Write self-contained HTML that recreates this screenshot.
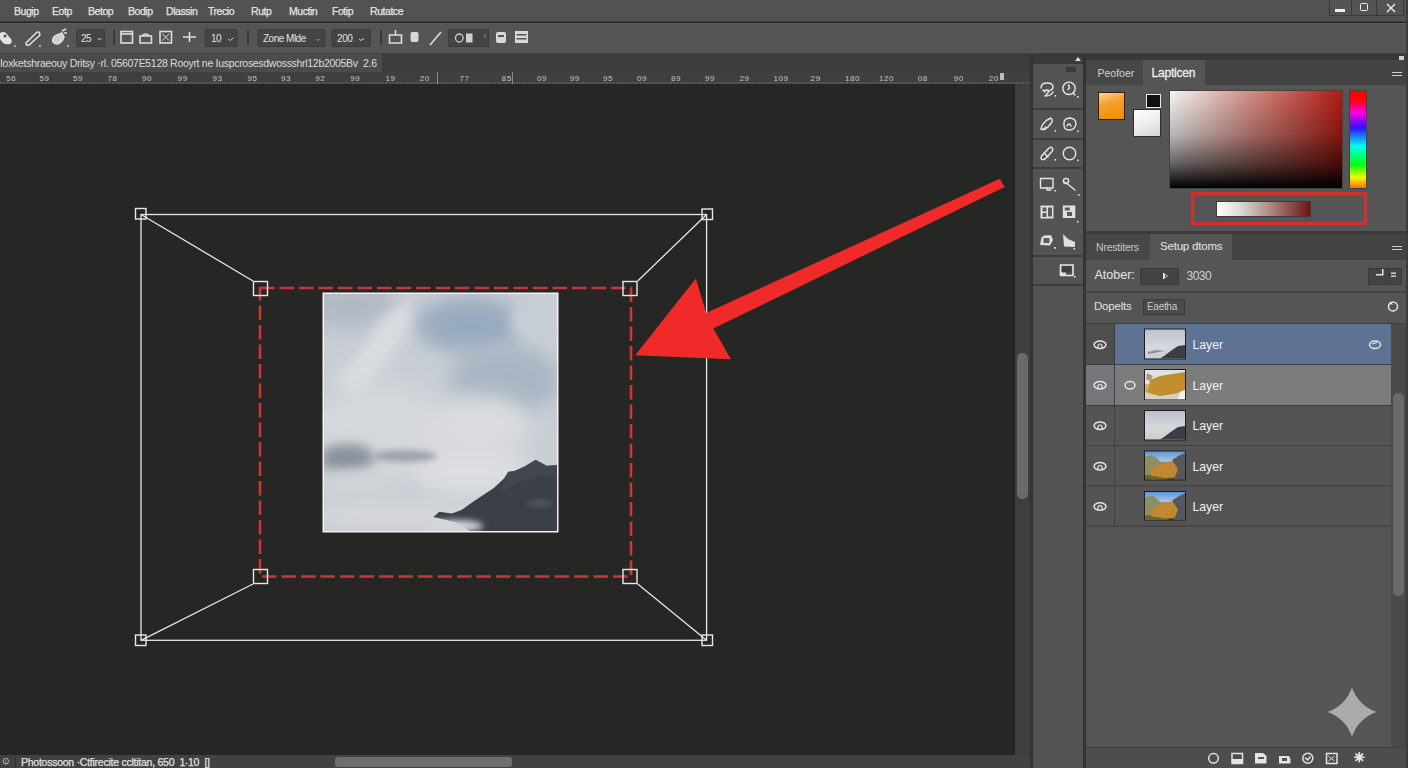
<!DOCTYPE html>
<html><head><meta charset="utf-8">
<style>
*{margin:0;padding:0;box-sizing:border-box}
html,body{width:1408px;height:768px;overflow:hidden;background:#252525;font-family:"Liberation Sans",sans-serif;color:#d8d8d8}
.a{position:absolute}
#menubar{left:0;top:0;width:1408px;height:22px;background:#525252;border-bottom:1px solid #3c3c3c}
#menubar span{position:absolute;top:5px;font-size:10.5px;color:#e4e4e4;letter-spacing:-0.45px;-webkit-text-stroke:0.25px #e4e4e4}
#toolbar{left:0;top:23px;width:1408px;height:31px;background:#555555;border-top:1px solid #5e5e5e;border-bottom:1px solid #404040}
#tabbar{left:0;top:54px;width:1032px;height:18px;background:#3c3c3c}
#tab1{left:0;top:54px;width:382px;height:18px;background:#4b4b4b}
#ruler{left:0;top:72px;width:1032px;height:12px;background:#3a3a3a;border-bottom:1px dotted #777}
#canvas{left:0;top:84px;width:1015px;height:671px;background:#262625}
#vtrack{left:1015px;top:84px;width:16px;height:671px;background:#3e3e3e}
#status{left:0;top:755px;width:1032px;height:13px;background:#424242}
#toolstrip{left:1031px;top:53px;width:55px;height:715px;background:#333}
#panel{left:1086px;top:53px;width:322px;height:715px;background:#383838}
</style></head><body>
<div id="menubar" class="a">
<span style="left:14px">Bugip</span>
<span style="left:52px">Eotp</span>
<span style="left:88px">Betop</span>
<span style="left:128px">Bodip</span>
<span style="left:166px">Dlassin</span>
<span style="left:208px">Trecio</span>
<span style="left:251px">Rutp</span>
<span style="left:289px">Muctin</span>
<span style="left:332px">Fotip</span>
<span style="left:370px">Rutatce</span>
</div>
<div id="toolbar" class="a"></div>
<div id="tabbar" class="a"></div>
<div id="tab1" class="a"></div>
<!-- ruler -->
<svg class="a" style="left:0;top:72px" width="1032" height="12">
<rect x="0" y="0" width="1032" height="12" fill="#3f3f3f"/>
<line x1="0" y1="11" x2="1030" y2="11" stroke="#8a8a8a" stroke-width="1" stroke-dasharray="1 1.2"/>
<rect x="437" y="0" width="1" height="12" fill="#888"/><rect x="512" y="0" width="1" height="12" fill="#888"/>
<g font-family="Liberation Sans" font-size="8" fill="#c4c4c4" letter-spacing="0.6">
<text x="6.3" y="9">56</text>
<text x="39.5" y="9">59</text>
<text x="73" y="9">59</text>
<text x="107.5" y="9">78</text>
<text x="142" y="9">90</text>
<text x="177.6" y="9">99</text>
<text x="212.4" y="9">93</text>
<text x="247.4" y="9">95</text>
<text x="281" y="9">93</text>
<text x="315.3" y="9">92</text>
<text x="350.3" y="9">99</text>
<text x="385.4" y="9">19</text>
<text x="419.8" y="9">20</text>
<text x="459.5" y="9">77</text>
<text x="501.6" y="9">85</text>
<text x="537" y="9">09</text>
<text x="569.8" y="9">99</text>
<text x="603" y="9">95</text>
<text x="637" y="9">09</text>
<text x="671" y="9">89</text>
<text x="705" y="9">99</text>
<text x="739.4" y="9">29</text>
<text x="773.5" y="9">109</text>
<text x="810.6" y="9">29</text>
<text x="845" y="9">180</text>
<text x="879" y="9">120</text>
<text x="917.7" y="9">08</text>
<text x="953.7" y="9">90</text>
<text x="988.7" y="9">20</text>
</g>
<rect x="1000" y="1" width="4" height="7" fill="#bbb"/>
</svg>
<div id="canvas" class="a"></div>
<svg class="a" style="left:0;top:0" width="1408" height="768" viewBox="0 0 1408 768">
<defs>
<linearGradient id="sky" x1="0" y1="0" x2="0.3" y2="1">
<stop offset="0" stop-color="#b4bdc7"/>
<stop offset="0.35" stop-color="#c3c9d0"/>
<stop offset="0.6" stop-color="#d3d5d8"/>
<stop offset="1" stop-color="#cfd1d4"/>
</linearGradient>
<filter id="blur6" x="-50%" y="-50%" width="200%" height="200%"><feGaussianBlur stdDeviation="6"/></filter>
<filter id="blur3" x="-50%" y="-50%" width="200%" height="200%"><feGaussianBlur stdDeviation="3"/></filter>
<filter id="blur10" x="-50%" y="-50%" width="200%" height="200%"><feGaussianBlur stdDeviation="10"/></filter>
<clipPath id="photoclip"><rect x="324" y="294" width="233" height="237"/></clipPath>
</defs>
<!-- photo -->
<rect x="322.5" y="292.5" width="236" height="240" fill="#f2f2f2"/>
<g clip-path="url(#photoclip)">
<rect x="324" y="294" width="233" height="237" fill="#c9ced4"/>
<ellipse cx="350" cy="305" rx="50" ry="25" fill="#b3bac4" filter="url(#blur10)"/>
<ellipse cx="470" cy="325" rx="55" ry="28" fill="#98aac0" filter="url(#blur10)"/>
<ellipse cx="505" cy="380" rx="55" ry="35" fill="#a9b5c3" filter="url(#blur10)"/>
<ellipse cx="535" cy="320" rx="25" ry="20" fill="#c7ced6" filter="url(#blur6)"/>
<path d="M405 300 Q420 320 395 350 Q375 380 355 400 L335 380 Q365 350 380 320 Z" fill="#d8dbdf" filter="url(#blur6)"/>
<ellipse cx="380" cy="430" rx="70" ry="45" fill="#d5d8db" filter="url(#blur10)"/>
<ellipse cx="480" cy="425" rx="50" ry="30" fill="#d9dbde" filter="url(#blur10)"/>
<ellipse cx="470" cy="470" rx="60" ry="25" fill="#dcdee0" filter="url(#blur10)"/>
<ellipse cx="347" cy="458" rx="28" ry="14" fill="#8a929c" filter="url(#blur6)"/>
<ellipse cx="405" cy="456" rx="32" ry="6" fill="#9ca2aa" filter="url(#blur3)"/>
<ellipse cx="360" cy="485" rx="40" ry="15" fill="#cfd2d6" filter="url(#blur6)"/>
<ellipse cx="400" cy="515" rx="90" ry="14" fill="#d3d5d8" filter="url(#blur6)"/>
<path d="M433.3 516.9 L439.3 511.8 L446 512.7 L452 513.5 L461.5 510 L473.4 501.6 L483.6 494.8 L493.9 488 L504 478.6 L508.3 471.8 L514.3 470.9 L524.5 466.6 L535.6 459.8 L546.7 465.8 L557 465 L557 531 L470 531 L455 522 Z" fill="#3b4048"/>
<path d="M504 478.6 L508.3 471.8 L514.3 470.9 L524.5 466.6 L535.6 459.8 L546.7 465.8 L557 465 L557 478 L540 476 L520 482 L500 492 Z" fill="#4b5058" opacity="0.45"/>
<ellipse cx="455" cy="526" rx="28" ry="6" fill="#d4d6d9" filter="url(#blur3)"/>
<ellipse cx="540" cy="503" rx="14" ry="2.5" fill="#5a5e64" filter="url(#blur3)"/>
</g>
<!-- outer transform rect -->
<g stroke="#e6e6e6" stroke-width="1.3" fill="none">
<rect x="141" y="214.5" width="565.6" height="425.8"/>
<line x1="141" y1="214.5" x2="253" y2="281"/>
<line x1="706.6" y1="214.5" x2="637.7" y2="281"/>
<line x1="141" y1="640.3" x2="253" y2="584"/>
<line x1="706.6" y1="640.3" x2="637.7" y2="584"/>
</g>
<!-- red dashed rect -->
<rect x="260" y="288" width="371" height="288.5" fill="none" stroke="#c9373a" stroke-width="2.6" stroke-dasharray="14.5 5"/>
<!-- handles -->
<g stroke="#e8e8e8" stroke-width="1.4" fill="none">
<rect x="135.5" y="208.5" width="10.5" height="10.5"/>
<rect x="702" y="209" width="10.5" height="10.5"/>
<rect x="135.5" y="635" width="10.5" height="10.5"/>
<rect x="702" y="635" width="10.5" height="10.5"/>
<rect x="253.5" y="281.5" width="14" height="14"/>
<rect x="623" y="281.5" width="14" height="14"/>
<rect x="253.5" y="569.5" width="14" height="14"/>
<rect x="623" y="569.5" width="14" height="14"/>
</g>
<!-- arrow -->
<path d="M999.7 178.7 L1004.7 186.9 L713.3 328.6 L730.9 359.2 L635.2 355.3 L695.8 278.5 L706.2 313 Z" fill="#ef2a28"/>
</svg>

<div id="vtrack" class="a"></div>
<div id="status" class="a"></div>
<!-- ===== tool strip ===== -->
<div class="a" style="left:1030px;top:54px;width:56px;height:714px;background:#343434"></div>
<div class="a" style="left:1033px;top:54px;width:50px;height:10.5px;background:#3a3a3a"></div>
<div class="a" style="left:1033px;top:64px;width:50px;height:704px;background:#535353"></div>
<div class="a" style="left:1066px;top:67px;width:10px;height:5px;background:#3a3a3a"></div>
<div class="a" style="left:1033px;top:108px;width:50px;height:1.5px;background:#3c3c3c"></div>
<div class="a" style="left:1033px;top:138px;width:50px;height:1.5px;background:#3c3c3c"></div>
<div class="a" style="left:1033px;top:167px;width:50px;height:1.5px;background:#3c3c3c"></div>
<div class="a" style="left:1033px;top:255px;width:50px;height:1.5px;background:#3c3c3c"></div>
<div class="a" style="left:1033px;top:284px;width:50px;height:1.5px;background:#3c3c3c"></div>
<!-- toolstrip icons -->
<svg class="a" style="left:1030px;top:50px" width="60" height="240" viewBox="1030 50 60 240">
<g fill="none" stroke="#e6e6e6" stroke-width="1.4" stroke-linecap="round" stroke-linejoin="round">
<!-- row1 lasso -->
<path d="M1041 88 Q1041 83 1047 83 Q1053 83 1053 87 Q1053 90 1048 91 M1044 91 Q1047 89 1049 91 Q1047 95 1045 96 Q1051 96 1053 92"/>
<path d="M1043 90 l2 2"/>
<!-- row1 magnifier -->
<circle cx="1069" cy="88.3" r="6.2"/>
<path d="M1068.5 85 l1 3 l-1.5 1.5 M1073 93 l2 2"/>
<!-- row2 pen -->
<path d="M1041 129 Q1042 124 1047 120 L1051 118 Q1053 120 1052 122 L1048 127 Q1044 131 1041 129 Z"/>
<path d="M1041 129 Q1044 130 1046 127" />
<!-- row2 circle -->
<path d="M1064 125 Q1063 119 1069 118 Q1076 118 1076 124 Q1075 130 1069 130 Q1064 130 1064 125 Z"/>
<path d="M1067 126 q2 -4 4 0"/>
<!-- row3 eraser -->
<path d="M1041.5 156 L1049 148 Q1051 146.5 1052.5 148.5 Q1053.5 150 1052 151.5 L1045 159 Q1042 160.5 1041 158.5 Z"/>
<path d="M1044 153 l4 4"/>
<!-- row3 circle -->
<circle cx="1069.5" cy="153.5" r="6.2"/>
<!-- row4 rect -->
<rect x="1040.5" y="178.5" width="12.5" height="9.5"/>
<path d="M1047 188 v2 h4"/>
<!-- row4 wand -->
<path d="M1065 182 l10 8"/>
<circle cx="1066" cy="181" r="2.6"/>
<!-- row7 monitor -->
<rect x="1060.5" y="265" width="12.5" height="10.5" stroke-width="1.6"/>
</g>
<g fill="#e0e0e0">
<!-- row5 icons -->
<rect x="1040.5" y="205.5" width="13" height="13" />
<rect x="1062.8" y="205.5" width="12.5" height="12.5"/>
<!-- row6 -->
<path d="M1040 245 L1041.5 237.5 L1044 235.5 L1051 235.2 L1053 240 L1050 245.5 Z"/>
<path d="M1063 234 L1068 239 L1075 242 L1075 247 L1064 246.5 L1063.5 240 Z"/>
<rect x="1060" y="272" width="6" height="4"/>
<!-- corner markers -->
<rect x="1054.5" y="95" width="1.6" height="1.6"/><rect x="1077" y="96" width="1.6" height="1.6"/>
<rect x="1054.5" y="130" width="1.6" height="1.6"/><rect x="1077" y="130.5" width="1.6" height="1.6"/>
<rect x="1054.5" y="159" width="1.6" height="1.6"/><rect x="1077" y="159.5" width="1.6" height="1.6"/>
<rect x="1054.5" y="190" width="1.6" height="1.6"/><rect x="1078" y="194" width="1.6" height="1.6"/>
<rect x="1077" y="221" width="1.6" height="1.6"/>
<rect x="1054" y="247" width="1.8" height="1.8"/><rect x="1073.5" y="248" width="1.6" height="1.6"/>
<rect x="1074" y="276" width="1.6" height="1.6"/>
<path d="M1075 61 l3 -4 l3 4 z"/>
</g>
<g fill="#5a5a5a">
<rect x="1042.5" y="207.5" width="4" height="4"/><rect x="1048" y="207.5" width="4" height="9"/><rect x="1042.5" y="213" width="4" height="4"/>
<rect x="1064.8" y="207.5" width="5" height="3"/><rect x="1067" y="212" width="5" height="4"/>
<rect x="1043.5" y="238" width="6" height="5"/>
<rect x="1062" y="266.5" width="9.5" height="6" fill="#3c3c3c"/>
</g>
</svg>

<!-- ===== panel ===== -->
<div class="a" style="left:1086px;top:54px;width:322px;height:6px;background:#393939"></div>
<div class="a" style="left:1086px;top:60px;width:320px;height:25px;background:#434343"></div>
<div class="a" style="left:1086px;top:60px;width:57px;height:25px;background:#474747"></div>
<div class="a" style="left:1143px;top:60px;width:62px;height:25px;background:#555555"></div>
<div class="a" style="left:1097.5px;top:66.5px;font-size:10.5px;color:#d2d2d2">Peofoer</div>
<div class="a" style="left:1151.5px;top:66px;font-size:12px;color:#ededed;letter-spacing:-0.2px;-webkit-text-stroke:0.3px #ededed">Lapticen</div>
<div class="a" style="left:1392px;top:71.5px;width:9.5px;height:1.3px;background:#cfcfcf"></div>
<div class="a" style="left:1392px;top:74.5px;width:9.5px;height:1.3px;background:#cfcfcf"></div>
<div class="a" style="left:1399px;top:56px;width:5px;height:4px;background:#cfcfcf"></div>
<div class="a" style="left:1086px;top:85px;width:320px;height:146px;background:#555555"></div>
<div class="a" style="left:1406px;top:0px;width:2px;height:768px;background:#3c3c3c"></div>
<!-- swatches -->
<div class="a" style="left:1097.5px;top:92px;width:27.5px;height:27.5px;background:linear-gradient(160deg,#fbd79a 0%,#f5a030 40%,#f08a00 100%);border:1px solid #2e2416"></div>
<div class="a" style="left:1145.5px;top:93.5px;width:15px;height:14.5px;background:#111;border:1.6px solid #e8e8e8"></div>
<div class="a" style="left:1132.5px;top:108.5px;width:28px;height:28px;background:linear-gradient(160deg,#ffffff 0%,#ececec 55%,#d2d2d2 100%);border:1px solid #2e2e2e"></div>
<!-- gradient square -->
<div class="a" style="left:1169.5px;top:90.5px;width:172.5px;height:97px;background:linear-gradient(to bottom,rgba(0,0,0,0) 0%,rgba(0,0,0,0.25) 45%,rgba(0,0,0,0.6) 75%,#000 100%),linear-gradient(to right,#f6f6f6 0%,#d49088 45%,#b01c14 100%);box-shadow:0 0 0 0.5px #333"></div>
<div class="a" style="left:1350px;top:90.5px;width:16px;height:97px;background:linear-gradient(to bottom,#ff0000 0%,#ff0010 10%,#ff00e0 22%,#3010ff 38%,#00ffee 57%,#00ff10 76%,#f0ff00 89%,#ff6a00 100%);box-shadow:0 0 0 0.5px #3a2a2a"></div>
<div class="a" style="left:1190.5px;top:192px;width:176px;height:33px;border:3px solid #d3302d"></div>
<div class="a" style="left:1216.5px;top:201.5px;width:93px;height:14.5px;background:linear-gradient(to right,#ffffff 0%,#d9d9d6 25%,#b08e88 55%,#701414 100%);box-shadow:0 0 0 0.6px #3a2020"></div>
<!-- panel 2 -->
<div class="a" style="left:1086px;top:231px;width:320px;height:3px;background:#3a3a3a"></div>
<div class="a" style="left:1086px;top:234px;width:320px;height:26px;background:#434343"></div>
<div class="a" style="left:1086px;top:234px;width:64px;height:26px;background:#474747"></div>
<div class="a" style="left:1150px;top:234px;width:82px;height:26px;background:#555555"></div>
<div class="a" style="left:1096px;top:241px;font-size:10.5px;color:#c8c8c8;letter-spacing:-0.2px">Nrestiters</div>
<div class="a" style="left:1160px;top:240px;font-size:11.5px;color:#e6e6e6;letter-spacing:-0.2px">Setup dtoms</div>
<div class="a" style="left:1392px;top:245.5px;width:9.5px;height:1.3px;background:#cfcfcf"></div>
<div class="a" style="left:1392px;top:248.5px;width:9.5px;height:1.3px;background:#cfcfcf"></div>
<div class="a" style="left:1086px;top:260px;width:320px;height:487px;background:#555555"></div>
<div class="a" style="left:1094.5px;top:268px;font-size:12.5px;color:#e6e6e6">Atober:</div>
<div class="a" style="left:1139.5px;top:267.5px;width:39px;height:17px;background:#434343;border:1px solid #3a3a3a"></div>
<div class="a" style="left:1186.5px;top:269px;font-size:12px;color:#d0d0d0;letter-spacing:-0.5px">3030</div>
<div class="a" style="left:1368px;top:267.5px;width:33.5px;height:17px;background:#444;border:1px solid #393939"></div>
<div class="a" style="left:1086px;top:291px;width:320px;height:1.5px;background:#434343"></div>
<div class="a" style="left:1094px;top:300px;font-size:11.5px;color:#e0e0e0;letter-spacing:-0.2px">Dopelts</div>
<div class="a" style="left:1142.5px;top:298.5px;width:42px;height:16.5px;background:#4a4a4a;border:1px solid #3c3c3c"></div>
<div class="a" style="left:1147px;top:301px;font-size:10px;color:#c8c8c8;letter-spacing:-0.3px">Eaetha</div>
<div class="a" style="left:1086px;top:323px;width:320px;height:1.5px;background:#3f3f3f"></div>

<!-- layers -->
<svg class="a" style="left:0;top:0" width="1408" height="768">
<defs>
<linearGradient id="tsky" x1="0" y1="0" x2="0" y2="1"><stop offset="0" stop-color="#b9c2cc"/><stop offset="0.6" stop-color="#d6d8dc"/><stop offset="1" stop-color="#c9ccd0"/></linearGradient>
<linearGradient id="tgold" x1="0" y1="0" x2="1" y2="1"><stop offset="0" stop-color="#e8e4da"/><stop offset="0.45" stop-color="#c99a3a"/><stop offset="0.7" stop-color="#b07a2a"/><stop offset="1" stop-color="#d8d2c4"/></linearGradient>
<linearGradient id="tblue" x1="0" y1="0" x2="0" y2="1"><stop offset="0" stop-color="#5b93d6"/><stop offset="0.35" stop-color="#a9c6e6"/><stop offset="0.4" stop-color="#8c8a5c"/><stop offset="0.75" stop-color="#b58a30"/><stop offset="1" stop-color="#3e4a30"/></linearGradient>
</defs>
<!-- row backgrounds -->
<rect x="1086" y="324" width="29" height="40" fill="#4e4e4e"/>
<rect x="1115" y="324" width="276" height="40" fill="#5e7293"/>
<rect x="1086" y="365" width="29" height="40" fill="#74767b"/>
<rect x="1115" y="365" width="276" height="40" fill="#7c7c7c"/>
<rect x="1086" y="405.5" width="305" height="120" fill="#545454"/>
<g fill="#3e3e3e">
<rect x="1086" y="364" width="305" height="1"/>
<rect x="1086" y="405" width="305" height="1"/>
<rect x="1086" y="445" width="305" height="1"/>
<rect x="1086" y="485.3" width="305" height="1"/>
<rect x="1086" y="525.5" width="305" height="1.2"/>
<rect x="1114" y="324" width="1" height="202"/>
</g>
<!-- thumbs -->
<g stroke="#1e1e1e" stroke-width="1">
<rect x="1144.5" y="329" width="41" height="30" fill="url(#tsky)"/>
<rect x="1144.5" y="369.5" width="41" height="30" fill="url(#tgold)"/>
<rect x="1144.5" y="410.5" width="41" height="29.5" fill="url(#tsky)"/>
<rect x="1144.5" y="451" width="41" height="29" fill="url(#tblue)"/>
<rect x="1144.5" y="491.5" width="41" height="28.5" fill="url(#tblue)"/>
</g>
<path d="M1164 356 L1172 350 L1178 346 L1185 345 L1185 358.5 L1160 358.5 Z" fill="#3a3f46"/>
<path d="M1164 437 L1172 431 L1178 427 L1185 426 L1185 439.5 L1160 439.5 Z" fill="#3a3f46"/>
<path d="M1148 352 L1156 350 L1165 351 L1148 354 Z" fill="#8a9098"/>
<path d="M1145 370 L1185 370 L1185 376 L1170 380 L1158 378 L1150 384 L1145 384 Z" fill="#dfe3e6"/>
<path d="M1150 380 L1160 376 L1172 374 L1185 372 L1185 390 L1170 394 L1155 395 L1148 392 Z" fill="#c38f2e"/>
<path d="M1145 392 L1160 396 L1185 392 L1185 399.5 L1145 399.5 Z" fill="#d6d0c2"/>
<path d="M1147 373 L1153 376 L1150 381 L1146 379 Z" fill="#a89a70"/>
<path d="M1180 392 L1185 390 L1185 399 L1178 399 Z" fill="#f2f2f0"/>
<path d="M1145 457 L1152 455 L1158 459 L1162 465 L1158 473 L1145 475 Z" fill="#8a8f6a"/>
<path d="M1150 469 L1162 463 L1172 461 L1178 467 L1176 477 L1152 479.5 Z" fill="#c08830"/>
<path d="M1172 460 L1180 455 L1185 453 L1185 479.5 L1174 479.5 L1178 469 Z" fill="#55575a"/>
<path d="M1145 475 L1160 477 L1170 479.5 L1145 479.5 Z" fill="#6a6530"/>
<path d="M1145 497.5 L1152 495.5 L1158 499.5 L1162 505.5 L1158 513.5 L1145 515.5 Z" fill="#8a8f6a"/>
<path d="M1150 509.5 L1162 503.5 L1172 501.5 L1178 507.5 L1176 517.5 L1152 520.0 Z" fill="#c08830"/>
<path d="M1172 500.5 L1180 495.5 L1185 493.5 L1185 520.0 L1174 520.0 L1178 509.5 Z" fill="#55575a"/>
<path d="M1145 515.5 L1160 517.5 L1170 520.0 L1145 520.0 Z" fill="#6a6530"/>

<!-- eyes -->
<g fill="none" stroke="#e4e4e4" stroke-width="1.5">
<ellipse cx="1100" cy="344.8" rx="6" ry="3.8"/>
<ellipse cx="1100" cy="385.3" rx="6" ry="3.8"/>
<ellipse cx="1100" cy="425.8" rx="6" ry="3.8"/>
<ellipse cx="1100" cy="466.3" rx="6" ry="3.8"/>
<ellipse cx="1100" cy="506.5" rx="6" ry="3.8"/>
<ellipse cx="1130" cy="385.3" rx="5" ry="3.8"/>
<ellipse cx="1375" cy="344.8" rx="5.5" ry="3.8"/>
</g>
<g fill="none" stroke="#e4e4e4" stroke-width="1.2">
<path d="M1098 348 v-2 a2 2 0 0 1 4 0 v2"/>
<path d="M1098 388.5 v-2 a2 2 0 0 1 4 0 v2"/>
<path d="M1098 429 v-2 a2 2 0 0 1 4 0 v2"/>
<path d="M1098 469.5 v-2 a2 2 0 0 1 4 0 v2"/>
<path d="M1098 509.7 v-2 a2 2 0 0 1 4 0 v2"/>
<path d="M1372 344 l5 -1.5"/>
</g>
</svg>
<div class="a" style="left:1192.5px;top:338px;font-size:12.2px;color:#f0f0f0">Layer</div>
<div class="a" style="left:1192.5px;top:378.5px;font-size:12.2px;color:#f0f0f0">Layer</div>
<div class="a" style="left:1192.5px;top:419px;font-size:12.2px;color:#f0f0f0">Layer</div>
<div class="a" style="left:1192.5px;top:459.5px;font-size:12.2px;color:#f0f0f0">Layer</div>
<div class="a" style="left:1192.5px;top:499.5px;font-size:12.2px;color:#f0f0f0">Layer</div>
<!-- scrollbar -->
<div class="a" style="left:1391px;top:324px;width:15px;height:423px;background:#4a4a4a"></div>
<div class="a" style="left:1392.5px;top:393px;width:11px;height:203px;background:#6a6a6a;border-radius:5px"></div>
<!-- footer -->
<div class="a" style="left:1086px;top:747px;width:320px;height:21px;background:#4d4d4d;border-top:1px solid #3e3e3e"></div>
<!-- footer icons & small panel icons -->
<svg class="a" style="left:1080px;top:255px" width="328" height="513" viewBox="1080 255 328 513">
<g fill="none" stroke="#e4e4e4" stroke-width="1.5">
<circle cx="1213.5" cy="758.3" r="4.8"/>
<rect x="1232" y="753.5" width="10.5" height="10"/>
<circle cx="1307.8" cy="758.3" r="5"/>
<rect x="1326.5" y="753.5" width="10.5" height="10"/>
<path d="M1305 757.5 l2.5 2.5 l3 -3.5"/>
<path d="M1328.5 756 l6 5 M1334.5 756 l-6 5" stroke-width="1"/>
<circle cx="1393" cy="306.4" r="4.5"/>
</g>
<g fill="#e4e4e4">
<rect x="1232" y="759" width="10.5" height="4.5"/>
<path d="M1255 753 h8 l3.5 3 v7.5 h-11.5 z"/>
<path d="M1279 756 h10 l1.5 3 v4.5 h-11.5 z"/>
<path d="M1358.5 752 h1.6 v3 l2.4 -2 1.1 1.1 -2 2.4 h3 v1.6 h-3 l2 2.4 -1.1 1.1 -2.4 -2 v3 h-1.6 v-3 l-2.4 2 -1.1 -1.1 2 -2.4 h-3 v-1.6 h3 l-2 -2.4 1.1 -1.1 2.4 2 z"/>
<path d="M1163 272.5 l5 3.5 l-5 3.5 z" />
<rect x="1376" y="274" width="7" height="1.5"/><rect x="1382" y="269" width="1.5" height="6.5"/>
<rect x="1391" y="272.5" width="5" height="1.3"/><rect x="1391" y="275.5" width="5" height="1.3"/>
</g>
<g fill="#535353">
<rect x="1258" y="757" width="6" height="2"/>
<rect x="1282" y="758" width="5" height="3"/>
<path d="M1165 274.5 l2 1.5 l-2 1.5 z"/>
<circle cx="1393" cy="306.4" r="1.5"/>
</g>
<path d="M1389 305 l1.5 -2 l2 1.5" stroke="#e4e4e4" stroke-width="1.2" fill="none"/>
<rect x="1388" y="267.5" width="0.8" height="17" fill="#3a3a3a"/>
</svg>

<!-- sparkle -->
<svg class="a" style="left:1326px;top:686px" width="52" height="52" viewBox="0 0 52 52"><path d="M26 1.5 Q32.5 19.5 50.5 26 Q32.5 32.5 26 50.5 Q19.5 32.5 1.5 26 Q19.5 19.5 26 1.5 Z" fill="#ababab"/></svg>

<!-- window controls -->
<div class="a" style="left:1328.5px;top:-1px;width:75px;height:17px;border:1px solid #3a3a3a;background:#535353"></div>
<div class="a" style="left:1350.5px;top:0;width:1px;height:16px;background:#3a3a3a"></div>
<div class="a" style="left:1375.5px;top:0;width:1px;height:16px;background:#3a3a3a"></div>
<div class="a" style="left:1335px;top:9px;width:10px;height:3px;background:#eee"></div>
<div class="a" style="left:1359.5px;top:2.5px;width:8.5px;height:8.5px;border:1.8px solid #eee;border-radius:1.5px"></div>
<svg class="a" style="left:1385px;top:2px" width="12" height="12"><path d="M2 2 L10 10 M10 2 L2 10" stroke="#eee" stroke-width="1.4"/></svg>
<!-- toolbar icons -->
<svg class="a" style="left:0;top:23px" width="540" height="30">
<g fill="#e2e2e2">
<path d="M0 10 Q3 8 6 10 L11 16 Q13 19 10 21 Q6 22 3 20 L0 16 Z"/>
</g>
<circle cx="5" cy="13" r="1.5" fill="#555"/>
<g fill="none" stroke="#dedede" stroke-width="1.6">
<path d="M26 20 L36 10 Q38 8 39.5 10 Q40.5 11.5 39 13 L29 22 Q26 23 26 20 Z"/>
<path d="M53 19 Q52 14 57 12 L62 10 L64 14 Q62 20 57 21 Q54 21 53 19 Z" fill="#cfcfcf"/>
<path d="M62 8 l4 -2 M64 10 l3 0"/>
<rect x="121" y="8.5" width="11.5" height="11.5"/>
<path d="M121 11 h11.5"/>
<path d="M140 20 v-7 h11.5 v7 z M142 13 q3.5 -4 7.5 0"/>
<rect x="160" y="8.5" width="11.5" height="11.5"/>
<path d="M162.5 11 l6.5 6.5 M169 11 l-6.5 6.5" stroke-width="1"/>
<path d="M183 14 h13 M189.5 9 v10" />
<path d="M389.5 12 h12 v8 h-12 z M395.5 12 v-5"/>
<path d="M430 22 L441 9"/>
</g>
<g fill="#d8d8d8"><rect x="410.5" y="9" width="8" height="10" rx="2"/><rect x="496" y="9" width="10" height="11" rx="2"/><rect x="515" y="8" width="13" height="12"/></g>
<g fill="#525252"><rect x="516.5" y="11" width="10" height="1.5"/><rect x="516.5" y="15" width="10" height="1.5"/><rect x="498" y="12" width="6" height="2"/></g>
<g fill="#d0d0d0"><circle cx="40" cy="23" r="0.9"/><circle cx="68" cy="23" r="0.9"/><circle cx="15" cy="23" r="0.9"/></g>
<!-- dropdown boxes -->
<g fill="#444444" stroke="#3c3c3c" stroke-width="1">
<rect x="76.5" y="6.5" width="28" height="17" rx="1"/>
<rect x="205" y="6.5" width="32" height="17" rx="1"/>
<rect x="258" y="6.5" width="67" height="17" rx="1"/>
<rect x="332" y="6.5" width="38.5" height="17" rx="1"/>
<rect x="448.5" y="6.5" width="40" height="17" rx="0.5"/>
</g>
<g fill="#3a3a3a"><rect x="113" y="7" width="2" height="15"/><rect x="247" y="7" width="2" height="15"/><rect x="380" y="7" width="2" height="15"/></g>
<g fill="none" stroke="#cfcfcf" stroke-width="1"><path d="M97.5 15 l2 2 l2 -2"/><path d="M228.5 16 l2 1.5 l3 -3"/><path d="M316 16 l2 1.5 l2 -1.5" stroke="#888"/><path d="M359 16 l2 1.5 l3 -2"/><ellipse cx="459.3" cy="15" rx="3.8" ry="4" stroke-width="1.3"/><rect x="466.5" y="11" width="5.5" height="8" fill="#cfcfcf"/><path d="M485 11 v4" stroke="#888"/></g>
</svg>
<div class="a" style="left:81px;top:33px;font-size:10px;color:#e2e2e2;letter-spacing:-0.5px">25</div>
<div class="a" style="left:211px;top:33px;font-size:10px;color:#e2e2e2;letter-spacing:-0.5px">10</div>
<div class="a" style="left:263px;top:33px;font-size:10px;color:#e2e2e2;letter-spacing:-0.5px">Zone Mlde</div>
<div class="a" style="left:337px;top:33px;font-size:10px;color:#e2e2e2;letter-spacing:-0.4px">200</div>
<!-- tab bar text -->
<div class="a" style="left:0;top:57px;font-size:10.5px;color:#dcdcdc;letter-spacing:-0.3px;white-space:nowrap">Ioxketshraeouy Dritsy ·rl. 05607E5128 Rooyrt ne Iuspcrosesdwossshrl12b2005Bv&nbsp;&nbsp;2.6</div>
<!-- status bar -->
<div class="a" style="left:15px;top:755px;width:1px;height:13px;background:#333"></div>
<div class="a" style="left:2px;top:756px;font-size:9px;color:#ddd">⊙</div>
<div class="a" style="left:21px;top:755px;font-size:10.5px;color:#e0e0e0;letter-spacing:-0.25px;white-space:nowrap;-webkit-text-stroke:0.25px #e0e0e0">Photossoon ·Ctfirecite ccltitan, 650&nbsp; 1‧10&nbsp; []</div>
<div class="a" style="left:335px;top:756.5px;width:177px;height:10.5px;background:#6e6e6e;border-radius:3px"></div>
<!-- canvas scrollbar thumb -->
<div class="a" style="left:1016.5px;top:352.5px;width:11.5px;height:146px;background:#6a6a6a;border-radius:5px"></div>

</body></html>
